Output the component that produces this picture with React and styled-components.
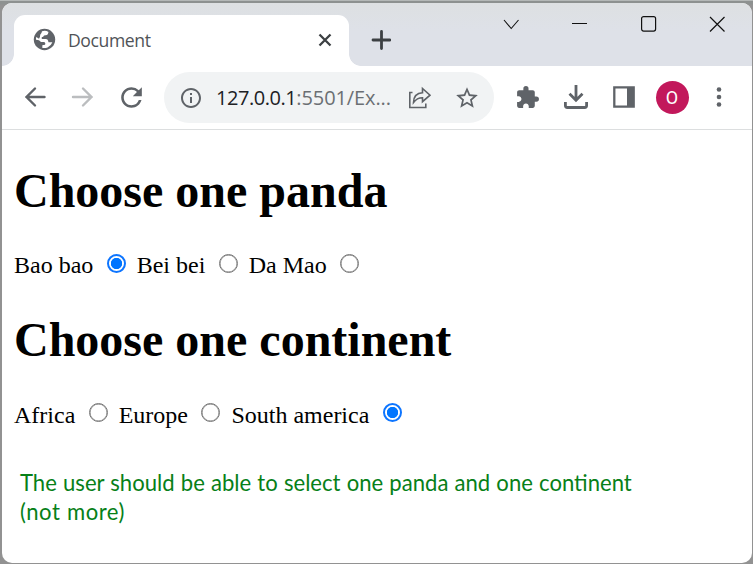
import React, { useState } from "react";
import styled, { createGlobalStyle } from "styled-components";
import { MdRefresh, MdInfoOutline, MdStarBorder, MdExtension } from "react-icons/md";

const GlobalStyle = createGlobalStyle`
  * { box-sizing: border-box; }
  body { margin: 0; background: #929493; overflow: hidden; }
  svg { display: block; flex: none; }
`;

const Desktop = styled.div`
  width: 753px;
  height: 564px;
  padding: 3px 1px 1px 2px;
  background: linear-gradient(#b4b8b7 0, #b4b8b7 1px, #8d9190 1px, #8d9190 4px, #929292 5px);
`;

const Window = styled.div`
  height: 560px;
  display: flex;
  flex-direction: column;
  background: #fff;
  border-radius: 10px;
  overflow: hidden;
`;

const TabStrip = styled.div`
  height: 63px;
  flex: none;
  display: flex;
  background: linear-gradient(#dde0e2, #dee1e8 45%);
`;

const TabFoot = styled.div`
  width: 12px;
  align-self: flex-end;
  height: 12px;
  background: radial-gradient(circle at ${(p) => (p.$left ? "0 0" : "100% 0")}, transparent 11.5px, #fff 12.2px);
`;

const Tab = styled.div`
  width: 335px;
  height: 51px;
  margin-top: 12px;
  padding: 0 15.5px 2px 18px;
  display: flex;
  align-items: center;
  border-radius: 11px 11px 0 0;
  background: #fff;
  color: #5f6368;
`;

const TabTitle = styled.span`
  flex: 1;
  margin: 0 0 0 11px;
  font: 17.6px/24px "Open Sans", sans-serif;
  letter-spacing: -0.4px;
  color: #505357;
`;

const NewTab = styled.div`
  margin: 27px 0 0 10px;
`;

const Controls = styled.div`
  flex: 1;
  display: flex;
  justify-content: flex-end;
  gap: 45px;
  padding: 9px 22px 0 0;
`;

const Toolbar = styled.div`
  height: 64px;
  flex: none;
  display: flex;
  align-items: center;
  padding: 0 20px 1px 20px;
  border-bottom: 1px solid #dcdedf;
  color: #5f6368;
`;

const NavButtons = styled.div`
  display: flex;
  align-items: center;
  gap: 22px;
  width: 142px;
`;

const ReloadIcon = styled(MdRefresh)`
  margin-left: -2px;
`;

const AddressBar = styled.div`
  width: 330px;
  flex: none;
  height: 51px;
  padding: 1px 14px 0 15px;
  display: flex;
  align-items: center;
  border-radius: 26px;
  background: #f1f3f4;
`;

const Address = styled.span`
  width: 192px;
  margin: 1px 0 0 13px;
  white-space: nowrap;
  font: 20px/28px "Open Sans", sans-serif;
  letter-spacing: -0.1px;
  color: #6b6f73;
`;

const Host = styled.span`
  letter-spacing: -0.45px;
  color: #202124;
`;

const BookmarkIcon = styled(MdStarBorder)`
  margin-left: auto;
`;

const Actions = styled.div`
  flex: 1;
  display: flex;
  align-items: center;
  gap: 23.7px;
  margin-left: 20.5px;
`;

const Avatar = styled.div`
  width: 33px;
  flex: none;
  height: 33px;
  margin-left: -3px;
  border-radius: 50%;
  background: #c2185b;
  color: #fff;
  text-align: center;
  font: 400 18px/34px Roboto, sans-serif;
`;

const MenuIcon = styled.svg`
  margin-left: -5px;
`;

const Page = styled.main`
  padding: 31.6px 12px 0;
  font: 24px/28px "Liberation Serif", serif;
  color: #000;
`;

const Heading = styled.h1`
  margin: 0;
  font-size: 48px;
  line-height: 58px;
  font-weight: 700;
`;

const Options = styled.div`
  display: flex;
  height: 28px;
  margin: 31.6px 0 32px;
`;

const Option = styled.label`
  display: flex;
  margin-right: 11px;
  white-space: nowrap;
`;

const Radio = styled.input.attrs({ type: "radio" })`
  appearance: none;
  flex: none;
  width: 19px;
  height: 19px;
  margin: 2.4px 0 0 13.4px;
  border: 1px solid #767676;
  box-shadow: inset 0 0 0 0.5px #767676;
  border-radius: 50%;
  background: #fff;
  &:checked {
    border: 2px solid #0d75ff;
    box-shadow: none;
    background: radial-gradient(circle, #0075ff 5.3px, #fff 6px);
  }
`;

const Note = styled.p`
  margin: 39.2px 0 0 6px;
  font: 22.1px/29px Lato, sans-serif;
  word-spacing: 0.5px;
  color: #078018;
`;

const NoteAside = styled.span`
  display: block;
  letter-spacing: 0.5px;
`;

function Stroke({ w, h, children, width = 2.4, color = "currentColor" }) {
  return (
    <svg width={w} height={h} viewBox={`0 0 ${w} ${h}`} fill="none" stroke={color} strokeWidth={width}>
      {children}
    </svg>
  );
}

function Globe() {
  return (
    <svg width="25" height="25" viewBox="-12.5 -12.5 25 25">
      <circle r="10.700" fill="#5f6368" />
      <path
        fill="#fff"
        d="M-2.500-8.200Q1-9.300 4-7.600L3.400-5.500Q2.800-4.300 1-4.300L-.5-4Q-1-2.300-2.800-2.200L-2.700-.6H1.500Q3.300-.5 3.600 1.300L4 2.800H7.900Q6.500 6.600 3 7.900Q0 9-2.300 8.200L-2 5.500H-.2Q1 5.300.8 3.800Q.6 2.500-1 2.500H-3.500L-5.500.7-8.500.2Q-8.600-1.500-8.200-2.400L-5.500-.7-4.500-2.800-4.300-4.700Q-3-5.500-2.500-8.200z"
      />
    </svg>
  );
}

function WindowControls() {
  return (
    <Controls>
      <Stroke w={24} h={24} width={1.1} color="#111"><path d="M5 8l7.200 8.500L19.500 8" /></Stroke>
      <Stroke w={24} h={24} width={1.1} color="#111"><path d="M4 11.500h15" /></Stroke>
      <Stroke w={24} h={24} width={1.2} color="#111"><rect x="4.600" y="4.600" width="14" height="14.500" rx="2" /></Stroke>
      <Stroke w={24} h={24} width={1.2} color="#111"><path d="M4 5l14.500 14.500M18.500 5L4 19.500" /></Stroke>
    </Controls>
  );
}

function RadioGroup({ name, options, initial }) {
  const [value, setValue] = useState(initial);
  return (
    <Options>
      {options.map((o) => (
        <Option key={o}>
          {o}
          <Radio name={name} checked={value === o} onChange={() => setValue(o)} />
        </Option>
      ))}
    </Options>
  );
}

export default function App() {
  return (
    <Desktop>
      <GlobalStyle />
      <Window>
        <TabStrip>
          <TabFoot $left />
          <Tab>
            <Globe />
            <TabTitle>Document</TabTitle>
            <Stroke w={18} h={18} color="#3c4043" width={2.3}><path d="M3.500 3.500l11 11M14.500 3.500l-11 11" /></Stroke>
          </Tab>
          <TabFoot />
          <NewTab>
            <Stroke w={20} h={20} color="#3c4043" width={2.8}><path d="M2 10h17M10.500 1.500v17" strokeLinecap="round" /></Stroke>
          </NewTab>
          <WindowControls />
        </TabStrip>
        <Toolbar>
          <NavButtons>
            <Stroke w={26} h={24}><path d="M22.500 12H4.500M13 3.500l-8.500 8.500 8.500 8.500" strokeLinecap="round" /></Stroke>
            <Stroke w={26} h={24} color="#bbbdbf"><path d="M3 12h18.500M13 3.500l8.500 8.500-8.500 8.500" strokeLinecap="round" /></Stroke>
            <ReloadIcon size={31} />
          </NavButtons>
          <AddressBar>
            <MdInfoOutline size={24} />
            <Address><Host>127.0.0.1</Host>:5501/Ex...</Address>
            <Stroke w={24} h={24} width={1.6}>
              <path d="M4.500 6.500H1.800v15h16v-4" />
              <path d="M5.500 16.500c.2-6 3.500-9.500 9-9.700V2.500l7.500 6.700-7.500 6.500v-4c-4 0-6.500 1.300-9 4.800z" />
            </Stroke>
            <BookmarkIcon size={26} />
          </AddressBar>
          <Actions>
            <MdExtension size={25} />
            <Stroke w={26} h={26} width={2.8}>
              <path d="M13 1v15M6.500 9.800l6.500 6.500 6.500-6.500M2.400 18v3.500q0 2 2 2h17.200q2 0 2-2V18" />
            </Stroke>
            <Stroke w={22} h={22} width={2.3}>
              <path d="M1.300 1.300h19.400v19.400H1.300z" />
              <path d="M14 2h6v18h-6z" fill="currentColor" stroke="none" />
            </Stroke>
            <Avatar>O</Avatar>
            <MenuIcon width="24" height="24" viewBox="0 0 24 24" fill="currentColor">
              <circle cx="12" cy="4.500" r="2.300" />
              <circle cx="12" cy="12" r="2.300" />
              <circle cx="12" cy="19.500" r="2.300" />
            </MenuIcon>
          </Actions>
        </Toolbar>
        <Page>
          <Heading>Choose one panda</Heading>
          <RadioGroup name="panda" options={["Bao bao", "Bei bei", "Da Mao"]} initial="Bao bao" />
          <Heading>Choose one continent</Heading>
          <RadioGroup name="continent" options={["Africa", "Europe", "South america"]} initial="South america" />
          <Note>
            The user should be able to select one panda and one continent
            <NoteAside>(not more)</NoteAside>
          </Note>
        </Page>
      </Window>
    </Desktop>
  );
}
